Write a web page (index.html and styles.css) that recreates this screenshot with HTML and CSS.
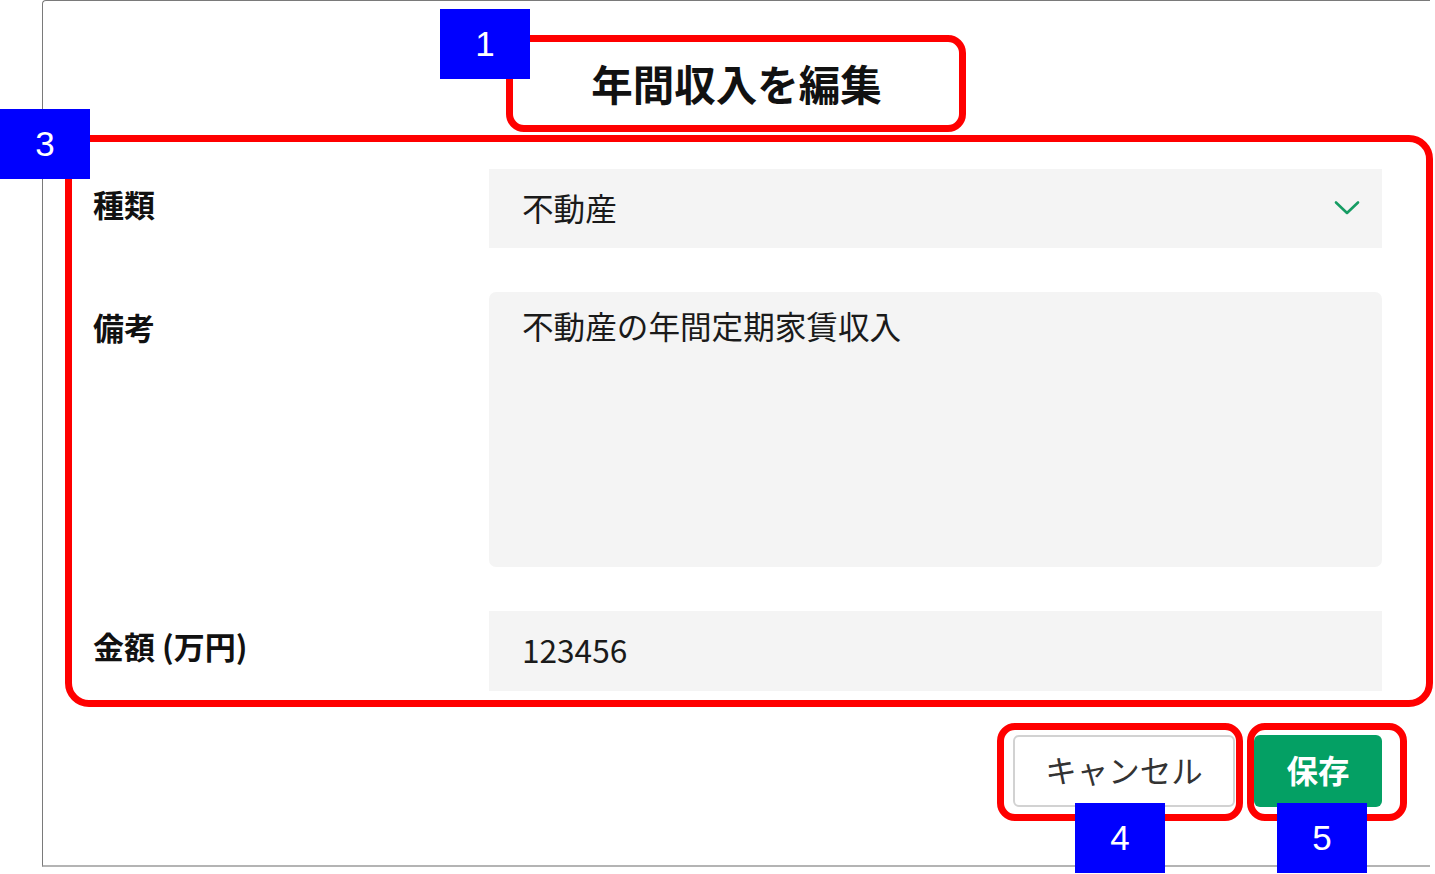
FILE: index.html
```html
<!DOCTYPE html>
<html lang="ja">
<head>
<meta charset="utf-8">
<title>年間収入を編集</title>
<link rel="stylesheet" href="styles.css">
</head>
<body>
<div class="stage">
  <div class="modal">
    <header class="modal-header">
      <h1 class="modal-title">年間収入を編集</h1>
    </header>
    <div class="form">
      <div class="row">
        <div class="label">種類</div>
        <div class="field select">
          <span class="field-text">不動産</span>
          <svg class="chevron" width="26" height="16" viewBox="0 0 26 16"><polyline points="2,2.5 13,13 24,2.5" fill="none" stroke="#169c63" stroke-width="2.6" stroke-linecap="round" stroke-linejoin="round"/></svg>
        </div>
      </div>
      <div class="row">
        <div class="label">備考</div>
        <div class="field textarea">不動産の年間定期家賃収入</div>
      </div>
      <div class="row">
        <div class="label">金額 (万円)</div>
        <div class="field input">123456</div>
      </div>
    </div>
    <div class="footer">
      <button class="btn btn-cancel">キャンセル</button>
      <button class="btn btn-save">保存</button>
    </div>
  </div>

  <div class="mark mark-1"></div>
  <div class="mark mark-3"></div>
  <div class="mark mark-4"></div>
  <div class="mark mark-5"></div>
  <div class="tag tag-1">1</div>
  <div class="tag tag-3">3</div>
  <div class="tag tag-4">4</div>
  <div class="tag tag-5">5</div>
</div>
</body>
</html>
```

FILE: styles.css
```css
html, body {
  margin: 0;
  padding: 0;
  background: #ffffff;
}

body {
  font-family: "Noto Sans CJK JP", "Noto Sans", sans-serif;
  color: #111;
  overflow: hidden;
}

.stage {
  position: relative;
  width: 1435px;
  height: 874px;
}

.modal {
  margin-left: 42px;
  width: 1388px;
  height: 867px;
  box-sizing: border-box;
  border-left: 1px solid #7a7a7a;
  border-top: 1px solid #7a7a7a;
  border-bottom: 2px solid #b4b4b4;
  border-top-left-radius: 4px;
  background: #fff;
  display: flex;
  flex-direction: column;
}

.modal-header {
  padding-top: 61px;
  padding-bottom: 1px;
  display: flex;
  justify-content: center;
}

.modal-title {
  margin: 0;
  font-size: 41.5px;
  line-height: 42px;
  font-weight: 700;
  color: #111;
}

.form {
  margin-top: 64px;
  padding: 0 48px 0 50px;
  display: flex;
  flex-direction: column;
  gap: 44px;
}

.row {
  display: grid;
  grid-template-columns: 396px 1fr;
  align-items: start;
}

.label {
  font-size: 31px;
  line-height: 40px;
  font-weight: 700;
  padding-top: 15px;
  color: #111;
}

.field {
  background: #f4f4f4;
  font-size: 31.6px;
  color: #1a1a1a;
  box-sizing: border-box;
  padding: 0 22px 0 33px;
}

.select {
  height: 79px;
  padding-bottom: 4px;
  display: flex;
  align-items: center;
  justify-content: space-between;
}

.chevron {
  display: block;
  margin-top: 2px;
}

.textarea {
  height: 275px;
  border-radius: 7px;
  padding-top: 13px;
  line-height: 40px;
}

.input {
  height: 80px;
  padding-bottom: 4px;
  display: flex;
  align-items: center;
}

.footer {
  margin-top: 44px;
  padding-right: 48px;
  display: flex;
  justify-content: flex-end;
  gap: 19px;
}

.btn {
  font-family: "Noto Sans CJK JP", "Noto Sans", sans-serif;
  font-size: 31.5px;
  height: 72px;
  box-sizing: border-box;
  border-radius: 6px;
  cursor: pointer;
  padding: 0 0 5px 0;
}

.btn-cancel {
  width: 222px;
  background: #fff;
  border: 2px solid #d2d2d2;
  color: #333;
}

.btn-save {
  width: 128px;
  background: #04a064;
  border: none;
  color: #fff;
  font-weight: 700;
}

/* annotation overlays */
.mark {
  position: absolute;
  box-sizing: border-box;
  border: 7px solid #ff0000;
  border-radius: 18px;
}

.mark-1 { left: 506px; top: 35px; width: 460px; height: 97px; }
.mark-3 { left: 65px; top: 135px; width: 1368px; height: 572px; border-radius: 24px; }
.mark-4 { left: 997px; top: 723px; width: 246px; height: 98px; }
.mark-5 { left: 1247px; top: 723px; width: 160px; height: 98px; }

.tag {
  position: absolute;
  width: 90px;
  height: 70px;
  background: #0000ff;
  color: #fff;
  font-family: "Liberation Sans", Arial, sans-serif;
  font-size: 35px;
  display: flex;
  align-items: center;
  justify-content: center;
}

.tag-1 { left: 440px; top: 9px; }
.tag-3 { left: 0; top: 109px; }
.tag-4 { left: 1075px; top: 803px; }
.tag-5 { left: 1277px; top: 803px; }
```
